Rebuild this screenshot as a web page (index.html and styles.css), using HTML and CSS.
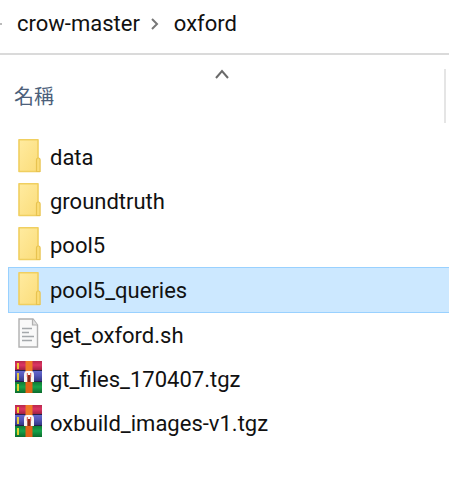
FILE: index.html
```html
<!DOCTYPE html>
<html lang="zh-Hant">
<head>
<meta charset="utf-8">
<meta name="viewport" content="width=device-width, initial-scale=1">
<title>oxford</title>
<link rel="stylesheet" href="styles.css">
</head>
<body>
<svg class="defs" width="0" height="0" aria-hidden="true">
  <defs>
    <linearGradient id="folder-fill" x1="0" y1="0" x2="1" y2="1">
      <stop offset="0" stop-color="#ffeba0"/><stop offset="1" stop-color="#fbdc78"/>
    </linearGradient>
    <linearGradient id="red" x1="0" y1="0" x2="0" y2="1">
      <stop offset="0" stop-color="#b8284c"/><stop offset=".4" stop-color="#dc3463"/><stop offset="1" stop-color="#941c3c"/>
    </linearGradient>
    <linearGradient id="blue" x1="0" y1="0" x2="0" y2="1">
      <stop offset="0" stop-color="#6468cc"/><stop offset=".4" stop-color="#5356b8"/><stop offset="1" stop-color="#30327e"/>
    </linearGradient>
    <linearGradient id="green" x1="0" y1="0" x2="0" y2="1">
      <stop offset="0" stop-color="#0f7a34"/><stop offset=".45" stop-color="#16a34a"/><stop offset="1" stop-color="#0c6b2c"/>
    </linearGradient>
    <symbol id="folder" viewBox="0 0 28 34">
      <path d="M4 .8h19v19.7l2-1.5v14H4z" fill="url(#folder-fill)"/>
      <path d="M23 19V.8H4v31.700h21" fill="none" stroke="#f0cf60" stroke-width="1.600" stroke-linejoin="round"/>
      <path d="M21.500 32.500V21q0-2 1.800-2t1.800 2v11.500z" fill="#fbdd78" stroke="#e8c350" stroke-width="1.200"/>
    </symbol>
    <symbol id="script" viewBox="0 1 28 34">
      <path d="M4 3h14l4.500 6v22H4z" fill="#f9f9f9" stroke="#b0b0b0" stroke-width="1.400"/>
      <path d="M17.500 3v6h5" fill="#e3e3e3" stroke="#b0b0b0" stroke-width="1.200"/>
      <path d="M7 12.500h10M7 16.500h7M7 20.500h12M7 24.500h10" stroke="#a4a8ab" stroke-width="1.300"/>
    </symbol>
    <symbol id="archive" viewBox="0 1 28 34">
      <path d="M0 1h27v10H0z" fill="url(#red)"/>
      <path d="M0 11h27v11H0z" fill="url(#blue)"/>
      <path d="M0 22h27v11H0z" fill="url(#green)"/>
      <path d="M0 10.500h27M0 21.500h27" stroke="#26204a"/>
      <path d="M3 3v6M3 13v7M3 24v7" stroke="#f5d72e" stroke-width="1.800"/>
      <path d="M10.500 1h7v12h-7z" fill="#ee7b26"/>
      <path d="M10.500 22h7v11h-7z" fill="#e26218"/>
      <path d="M9 22v-7q0-4 3-4h4q3 0 3 4v7z" fill="#f9f6f4"/>
      <path d="M12.300 22v-7h3.400v7z" fill="#8d2419"/>
      <path d="M12.300 13v4M15.700 13v4" stroke="#df5b4b"/>
    </symbol>
  </defs>
</svg>

<nav class="path" aria-label="路徑">
  <span class="path-start"></span>
  <a class="crumb" href="#">crow-master</a>
  <svg class="chevron" viewBox="0 0 8 14" aria-hidden="true"><path d="M1 2l5 5-5 5"/></svg>
  <a class="crumb" href="#">oxford</a>
</nav>

<main>
  <header class="columns">
    <button class="column" type="button">
      <svg class="sort" viewBox="0 0 14 10" aria-hidden="true"><path d="M1 9l6-7 6 7"/></svg>
      <span class="column-name">名稱</span>
    </button>
  </header>
  <ul class="files">
    <li><a class="file" href="#"><svg class="icon" aria-hidden="true"><use href="#folder"/></svg>data</a></li>
    <li><a class="file" href="#"><svg class="icon" aria-hidden="true"><use href="#folder"/></svg>groundtruth</a></li>
    <li><a class="file" href="#"><svg class="icon" aria-hidden="true"><use href="#folder"/></svg>pool5</a></li>
    <li><a class="file selected" href="#" aria-current="true"><svg class="icon" aria-hidden="true"><use href="#folder"/></svg>pool5_queries</a></li>
    <li><a class="file" href="#"><svg class="icon" aria-hidden="true"><use href="#script"/></svg>get_oxford.sh</a></li>
    <li><a class="file" href="#"><svg class="icon" aria-hidden="true"><use href="#archive"/></svg>gt_files_170407.tgz</a></li>
    <li><a class="file" href="#"><svg class="icon" aria-hidden="true"><use href="#archive"/></svg>oxbuild_images-v1.tgz</a></li>
  </ul>
</main>
</body>
</html>
```
FILE: styles.css
```css
* { box-sizing: border-box; }

body {
  margin: 0;
  background: #fff;
  color: #111;
  font: 22px/28px Roboto, "Noto Sans CJK TC", sans-serif;
}

a { color: inherit; text-decoration: none; }

.defs { position: absolute; }

.path {
  display: flex;
  align-items: center;
  height: 55px;
  padding-bottom: 6px;
  border-bottom: 2px solid #dadada;
}

.path-start {
  width: 2px;
  height: 2px;
  margin-right: 15px;
  background: #bbb;
}

.chevron {
  width: 8px;
  height: 14px;
  margin: 0 15px 0 11px;
  fill: none;
  stroke: #777;
  stroke-width: 2;
}

.columns {
  padding: 14px 3px 12px 0;
}

.column {
  display: flex;
  flex-direction: column;
  width: 100%;
  height: 54px;
  padding: 0;
  border: 0;
  border-right: 2px solid #e5e5e5;
  background: none;
  color: #4c607a;
  font: 20px/28px "Noto Sans CJK TC", sans-serif;
}

.sort {
  align-self: center;
  width: 14px;
  height: 10px;
  fill: none;
  stroke: #6a6a6a;
  stroke-width: 2;
}

.column-name {
  align-self: flex-start;
  margin-top: 3px;
  padding-left: 14px;
}

.files {
  margin: 0;
  padding: 0 0 0 8px;
  list-style: none;
}

.file {
  display: flex;
  align-items: center;
  gap: 7px;
  height: 44px;
  padding: 2px 0 0 7px;
}

.selected {
  height: 46px;
  padding: 1px 0 0 6px;
  border: 1px solid #99d1ff;
  border-right: 0;
  background: #cce8ff;
}

.icon {
  width: 28px;
  height: 34px;
  margin-bottom: 4px;
}
```
